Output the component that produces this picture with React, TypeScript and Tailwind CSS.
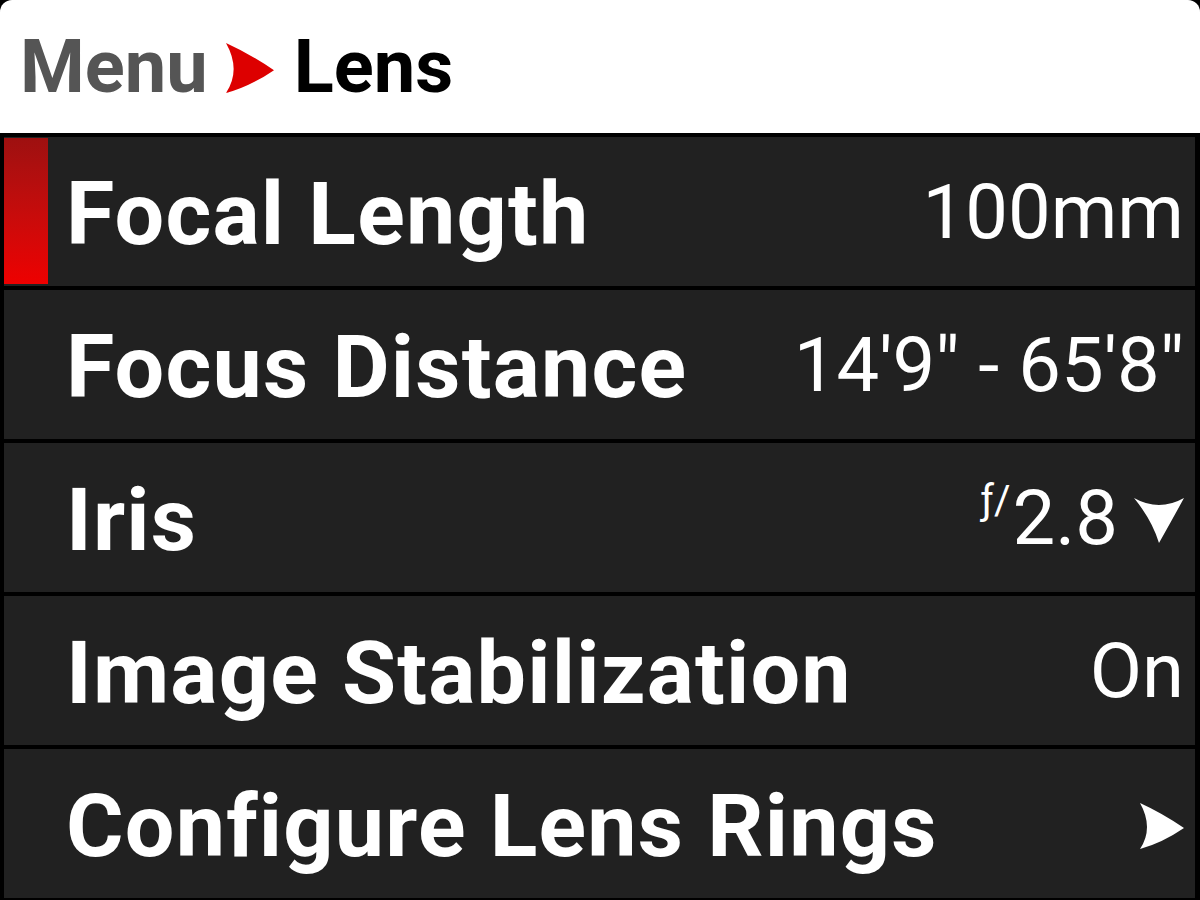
import React from "react";

function Dart({ className, dir = "right" }: { className?: string; dir?: "right" | "down" }) {
  const d =
    dir === "right"
      ? "M0 0 Q22 10 44 25 Q22 40 0 46 Q14 25 0 0 Z"
      : "M0 0 Q25 14 50 0 Q38 22 25 45 Q18 22 0 0 Z";
  return (
    <svg viewBox={dir === "right" ? "0 0 44 46" : "0 0 50 45"} className={className}>
      <path d={d} fill="currentColor" />
    </svg>
  );
}

function Row({
  label,
  children,
  active,
}: {
  label: string;
  children?: React.ReactNode;
  active?: boolean;
}) {
  return (
    <div className="relative flex h-[149px] items-center justify-between bg-[#212121] pl-[62px] pr-[11px]">
      {active && (
        <div className="absolute left-0 top-[1px] bottom-[2px] w-[44px] bg-gradient-to-b from-[#9e1010] to-[#ee0000]" />
      )}
      <span className="mt-[4px] text-[88px] font-bold leading-none tracking-[1.2px] text-white">{label}</span>
      <div className="flex items-center text-[76px] leading-none text-white">{children}</div>
    </div>
  );
}

export default function App() {
  return (
    <div className="h-[900px] w-[1200px] overflow-hidden bg-black" style={{ fontFamily: "Roboto, 'Noto Sans', sans-serif" }}>
      <div className="flex h-[133px] items-center rounded-t-[12px] bg-white pl-[20px]">
        <span className="text-[74px] font-bold leading-none text-[#555555]">Menu</span>
        <Dart className="ml-[18px] mr-[20px] mt-[2px] h-[52px] w-[48px] text-[#dd0000]" />
        <span className="text-[74px] font-bold leading-none text-black">Lens</span>
      </div>
      <div className="mt-[4px] flex flex-col gap-[4px] pl-[4px] pr-[5px]">
        <Row label="Focal Length" active>
          100mm
        </Row>
        <Row label="Focus Distance">14'9" - 65'8"</Row>
        <Row label="Iris">
          <span className="mb-[34px] mr-[2px] text-[40px]">ƒ/</span>
          <span>2.8</span>
          <Dart dir="down" className="ml-[16px] mt-[6px] h-[45px] w-[50px]" />
        </Row>
        <Row label="Image Stabilization">On</Row>
        <Row label="Configure Lens Rings">
          <Dart className="mt-[4px] h-[46px] w-[44px]" />
        </Row>
      </div>
    </div>
  );
}
